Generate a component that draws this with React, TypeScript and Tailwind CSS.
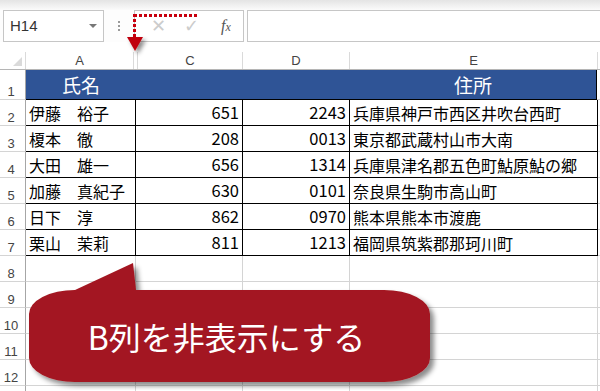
import React from "react";

const font = { fontFamily: '"Noto Sans CJK JP", "Noto Sans", sans-serif' };
const uiFont = { fontFamily: '"Liberation Sans", Arial, sans-serif' };

type Row = { name: string; c: string; d: string; addr: string };

const rows: Row[] = [
  { name: "伊藤　裕子", c: "651", d: "2243", addr: "兵庫県神戸市西区井吹台西町" },
  { name: "榎本　徹", c: "208", d: "0013", addr: "東京都武蔵村山市大南" },
  { name: "大田　雄一", c: "656", d: "1314", addr: "兵庫県津名郡五色町鮎原鮎の郷" },
  { name: "加藤　真紀子", c: "630", d: "0101", addr: "奈良県生駒市高山町" },
  { name: "日下　淳", c: "862", d: "0970", addr: "熊本県熊本市渡鹿" },
  { name: "栗山　茉莉", c: "811", d: "1213", addr: "福岡県筑紫郡那珂川町" },
];

function RowHeader({ n, h }: { n?: number; h: string }) {
  return (
    <div
      className={`${h} flex w-[26px] shrink-0 items-end justify-center border-b border-r border-b-[#d4d4d4] border-r-[#a6a6a6] pb-[1px] pr-[3px] text-[13px] leading-none text-[#444]`}
      style={uiFont}
    >
      {n}
    </div>
  );
}

function ColHeader({ label, w }: { label: string; w: string }) {
  return (
    <div
      className={`${w} flex h-full shrink-0 items-end justify-center border-r border-[#dadada] pb-[2px] text-[13px] leading-none text-[#444]`}
      style={uiFont}
    >
      {label}
    </div>
  );
}

function EmptyRow({ n }: { n?: number }) {
  return (
    <div className="flex h-[26px]">
      <RowHeader n={n} h="h-[26px]" />
      <div className="w-[110px] shrink-0 border-b border-r border-[#d4d4d4]" />
      <div className="w-[107px] shrink-0 border-b border-r border-[#d4d4d4]" />
      <div className="w-[107px] shrink-0 border-b border-r border-[#d4d4d4]" />
      <div className="w-[248px] shrink-0 border-b border-r border-[#d4d4d4]" />
      <div className="flex-1 border-b border-[#d4d4d4]" />
    </div>
  );
}

function FormulaBar() {
  return (
    <div className="flex h-[32px] items-stretch bg-[#fdfdfd] pl-[3px]">
      <div className="relative flex w-[101px] items-center border border-[#c6c6c6] bg-white pl-[6px]">
        <span className="text-[15px] text-[#333]" style={uiFont}>
          H14
        </span>
        <span className="absolute right-[6px] top-[13px] h-0 w-0 border-x-[4px] border-t-[4px] border-x-transparent border-t-[#777]" />
      </div>
      <div className="flex w-[30px] flex-col items-center justify-center gap-[2px]">
        <span className="h-[2px] w-[2px] bg-[#9a9a9a]" />
        <span className="h-[2px] w-[2px] bg-[#9a9a9a]" />
        <span className="h-[2px] w-[2px] bg-[#9a9a9a]" />
      </div>
      <div className="flex w-[110px] items-center border border-[#c6c6c6] bg-white">
        <span className="w-[38px] pl-[8px] text-center text-[18px] leading-none text-[#cccccc]" style={uiFont}>
          ✕
        </span>
        <span className="w-[36px] text-center text-[18px] leading-none text-[#cccccc]" style={uiFont}>
          ✓
        </span>
        <span
          className="w-[34px] text-center text-[16px] italic leading-none text-[#555]"
          style={{ fontFamily: '"Liberation Serif", serif' }}
        >
          f<span className="text-[12px]">x</span>
        </span>
      </div>
      <div className="ml-[3px] flex-1 border-y border-l border-[#c6c6c6] bg-white" />
    </div>
  );
}

export default function App() {
  return (
    <div className="relative h-[391px] w-[600px] overflow-hidden bg-white" style={font}>
      <div className="h-[10px] bg-gradient-to-b from-[#e4e4e4] to-[#fbfbfb]" />
      <FormulaBar />
      <div className="h-[10px] bg-white" />

      {/* column headers */}
      <div className="flex h-[18px] border-b border-[#b5b5b5]">
        <div className="relative w-[26px] shrink-0 border-r border-[#dadada]">
          <span className="absolute bottom-[3px] right-[3px] h-0 w-0 border-l-[9px] border-t-[9px] border-l-transparent border-t-transparent border-b-0 border-r-[9px] border-r-[#dadada]" />
        </div>
        <ColHeader label="A" w="w-[108px]" />
        <div className="h-full w-[4px] shrink-0 border-r border-[#dadada]" />
        <ColHeader label="C" w="w-[105px]" />
        <ColHeader label="D" w="w-[107px]" />
        <ColHeader label="E" w="w-[248px]" />
        <div className="flex-1" />
      </div>

      {/* row 1 : header of the table */}
      <div className="flex h-[30px]">
        <RowHeader n={1} h="h-[30px]" />
        <div className="flex w-[571px] shrink-0 border-b border-r border-black bg-[#2f5496] text-white">
          <div className="flex w-[110px] items-center justify-center pt-[1px] text-[19px]">氏名</div>
          <div className="w-[214px]" />
          <div className="flex flex-1 items-center justify-center pt-[1px] text-[19px]">住所</div>
        </div>
        <div className="flex-1 border-b border-[#d4d4d4]" />
      </div>

      {rows.map((r, i) => (
        <div key={r.name} className="flex h-[26px] text-[16px] leading-none text-black">
          <RowHeader n={i + 2} h="h-[26px]" />
          <div className="flex w-[110px] shrink-0 items-center whitespace-nowrap border-b border-r border-black pl-[3px]">
            {r.name}
          </div>
          <div className="flex w-[107px] shrink-0 items-center justify-end border-b border-r border-black pr-[3px] text-[16.5px]">
            {r.c}
          </div>
          <div className="flex w-[107px] shrink-0 items-center justify-end border-b border-r border-black pr-[3px] text-[16.5px]">
            {r.d}
          </div>
          <div className="flex w-[248px] shrink-0 items-center whitespace-nowrap border-b border-r border-black pl-[3px]">
            {r.addr}
          </div>
          <div className="flex-1 border-b border-[#d4d4d4]" />
        </div>
      ))}

      {[8, 9, 10, 11, 12].map((n) => (
        <EmptyRow key={n} n={n} />
      ))}
      <EmptyRow />

      {/* red dotted annotation with arrow */}
      <svg className="absolute left-0 top-0" width="220" height="60" viewBox="0 0 220 60">
        <defs>
          <filter id="sh" x="-50%" y="-50%" width="200%" height="200%">
            <feDropShadow dx="3" dy="3" stdDeviation="2" floodColor="#000" floodOpacity="0.45" />
          </filter>
        </defs>
        <line x1="134" y1="15.5" x2="198" y2="15.5" stroke="#c8000e" strokeWidth="3" strokeDasharray="3 2" />
        <line x1="134.5" y1="14" x2="134.5" y2="38" stroke="#c8000e" strokeWidth="3" strokeDasharray="3 2" />
        <polygon points="127,37 143,37 135,51" fill="#c00010" filter="url(#sh)" />
      </svg>

      {/* callout */}
      <div className="absolute left-[24px] top-[258px] h-[132px] w-[416px]">
        <svg className="absolute inset-0" width="416" height="132" viewBox="0 0 416 132">
          <defs>
            <filter id="cs" x="-10%" y="-20%" width="130%" height="150%">
              <feDropShadow dx="4" dy="4" stdDeviation="2.5" floodColor="#000" floodOpacity="0.45" />
            </filter>
          </defs>
          <path
            d="M 51 32 L 109 5 L 112 32 L 149 32 L 360 32 A 46 24 0 0 1 406 56 L 406 100 A 46 24 0 0 1 360 124 L 51 124 A 46 24 0 0 1 5 100 L 5 56 A 46 24 0 0 1 51 32 Z"
            fill="#a31921"
            filter="url(#cs)"
          />
        </svg>
        <div className="absolute left-[5px] top-[32px] flex h-[92px] w-[401px] items-center justify-center pr-[6px] text-[32px] leading-none text-white">
          B列を非表示にする
        </div>
      </div>
    </div>
  );
}
